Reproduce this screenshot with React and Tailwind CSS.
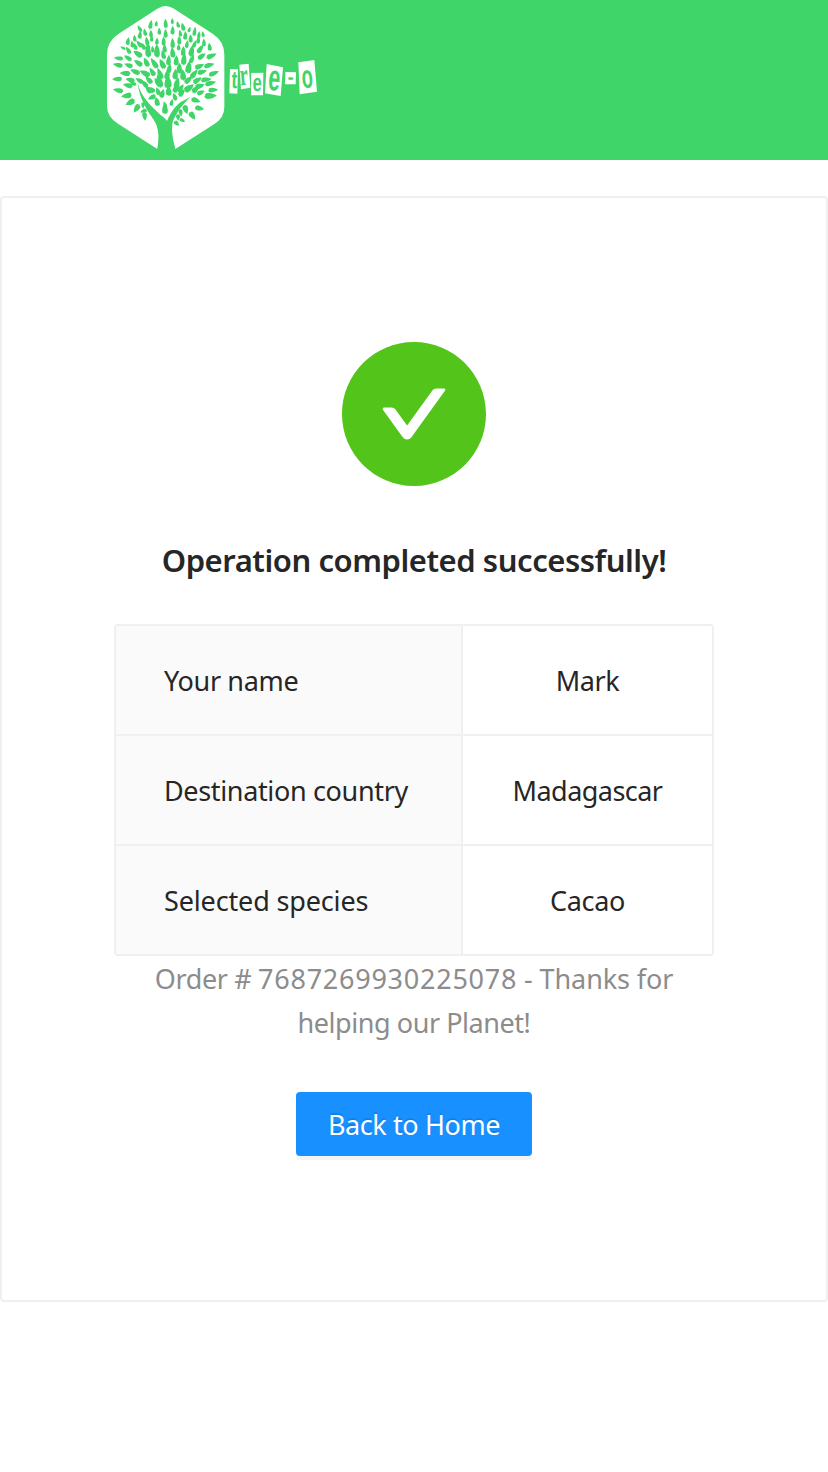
const leaves = [
  [152,74,29,12,12],[169,71,18,9,8],[197,71,29,12,-3],[217,64,18,9,0],[234,74,21,10,-14],[249,81,26,12,-12],
  [119,86,24,10,-30],[135,97,24,11,-10],[178,94,22,11,0],[218,91,28,12,5],[241,100,22,10,-8],[284,95,29,11,10],[268,89,18,9,20],[309,103,19,9,-12],[297,105,22,10,10],
  [120,105,26,12,8],[153,101,24,11,0],[197,101,28,12,0],[256,107,28,12,5],[272,116,26,12,0],[104,115,22,10,-5],
  [84,124,25,12,12],[97,133,22,11,-5],[118,132,28,12,-38],[141,124,28,12,-10],[155,115,22,10,0],[171,124,22,11,5],[191,124,30,12,0],[218,130,32,13,0],[238,121,28,12,0],[295,120,24,11,8],[312,128,25,11,0],[261,133,25,11,12],[284,132,24,11,20],
  [69,144,18,8,-60],[85,151,26,12,-30],[106,140,22,11,-15],[144,153,42,17,-5],[171,153,43,17,0],[194,146,28,13,0],[218,158,34,15,-5],[236,142,20,11,0],[250,154,32,14,5],[275,153,38,16,12],[329,141,26,12,-5],[301,147,32,14,35],
  [56,175,30,12,-82],[84,174,28,13,-55],[114,162,32,16,-55],[130,139,25,12,-25],[145,139,21,10,-12],[158,148,22,10,-6],[190,165,28,13,-16],[206,181,34,14,6],[229,182,32,15,6],[252,178,38,16,8],[276,177,28,13,25],[305,169,30,14,55],[334,168,34,15,68],
  [54,195,32,13,-76],[86,196,28,14,-68],[115,189,31,15,-56],[139,187,31,15,-25],[163,190,39,15,-32],[187,192,34,16,-24],[208,206,30,14,14],[238,205,35,16,3],[266,202,40,18,10],[298,199,31,15,68],[327,196,34,14,76],
  [76,220,33,15,-83],[106,215,32,15,-65],[135,220,36,16,-62],[157,216,30,14,-30],[180,221,39,15,-20],[202,224,34,16,10],[226,223,34,16,5],[249,225,36,17,-5],[282,222,34,15,40],[306,216,31,14,76],[341,220,34,14,70],
  [52,237,31,13,-89],[91,240,30,14,-76],[119,242,28,13,-58],[147,240,30,14,-42],[172,246,30,14,-32],[202,248,38,17,0],[231,250,38,17,12],[265,240,32,15,48],[292,241,31,15,61],[318,239,34,14,83],
  [55,271,33,14,-75],[84,256,31,14,-74],[99,250,24,11,-60],[134,252,29,14,-42],[146,269,29,15,-43],[178,244,43,19,-13],[205,247,37,20,0],[242,265,30,15,38],[267,264,37,18,55],[299,258,31,15,75],[331,250,36,14,77],[339,270,31,14,88],
  [80,287,33,17,-96],[156,292,26,14,-112],[154,269,27,14,-56],[174,274,27,13,-18],[187,281,29,15,18],[206,273,32,17,0],[227,266,28,15,22],[224,290,23,12,-22],[245,279,27,15,40],[287,268,29,16,50],[302,278,26,13,70],[331,288,39,18,88],
  [91,307,32,17,-116],[110,325,31,16,-145],[131,333,22,12,-105],[134,349,26,14,175],[129,316,20,10,180],[171,305,29,15,-10],[195,314,20,10,-20],[195,326,36,17,0],[215,308,22,11,15],[226,293,20,10,0],[287,301,30,15,110],[298,325,29,15,105],[257,328,29,16,164],[277,347,29,16,146],[242,338,24,12,172],[234,352,21,12,180],[247,361,20,10,120],[230,370,20,12,135]
];

const tiles = [
  { letter: 't', points: '24,57 48,58 46,131 22,130', x: 36, y: 114, size: 74, sx: .7, rotate: 2 },
  { letter: 'r', points: '52,44 80,41 85,113 57,118', x: 68, y: 105, size: 92, sx: .6, rotate: -5, serif: true },
  { letter: 'e', points: '87,69 124,68 123,136 87,136', x: 105, y: 123, size: 74, sx: .66, rotate: 1 },
  { letter: 'e', points: '134,42 183,52 176,138 129,130', x: 154, y: 121, size: 110, sx: .58, rotate: 5 },
  { letter: '-', points: '190,66 222,67 221,103 189,103', x: 206, y: 101, size: 58, sx: .95, rotate: 2 },
  { letter: 'o', points: '229,37 277,30 285,125 233,133', x: 258, y: 113, size: 98, sx: .56, rotate: -5 },
];

function Logo() {
  return (
    <svg className="block h-40 w-[230px]" viewBox="0 0 690 480" role="img" aria-label="tree-o">
      <path fill="#fff" d="M172 26Q197 10 222 26L338 101Q373 124 373 163V322Q373 354 342 373L226 447Q213 408 217 373H174Q181 405 172 447L54 371Q21 351 21 318V163Q21 124 56 101Z" />
      <g fill="#3fd569">
        {leaves.map(([x, y, h, w, angle], i) => (
          <path key={i} transform={`translate(${x} ${y}) rotate(${angle}) scale(${w / 18} ${h / 34})`} d="M-1-17C6-9 9-2 9 6C9 12 6 15 2 14L0 17L-2 13C-7 15-9 10-9 5C-9-4-5-10-1-17Z" />
        ))}
        <path d="M112 245C122 287 144 307 170 334C185 350 195 353 201 363C212 338 222 323 241 307L271 291C250 311 230 336 219 363C210 391 220 422 226 449H172C180 410 174 376 161 359C139 327 120 300 112 245Z" />
      </g>
      <g transform="translate(366 150)" fontWeight="700" textAnchor="middle">
        {tiles.map(({ letter, points, x, y, size, sx, rotate, serif }, i) => (
          <g key={i}>
            <polygon points={points} fill="#fff" />
            <text transform={`translate(${x} ${y}) rotate(${rotate}) scale(${sx} 1)`} fontFamily={serif ? 'Liberation Serif' : 'Liberation Sans'} fontSize={size} fill="#3fd569">{letter}</text>
          </g>
        ))}
      </g>
    </svg>
  );
}

const details = [
  { label: 'Your name', value: 'Mark', labelSpace: 'tracking-[-0.35px]', valueSpace: 'tracking-[-0.4px]' },
  { label: 'Destination country', value: 'Madagascar', labelSpace: 'tracking-[-0.35px]', valueSpace: 'tracking-[-0.55px]' },
  { label: 'Selected species', value: 'Cacao', labelSpace: 'tracking-[-0.15px]', valueSpace: 'tracking-[-0.3px]' },
];

export default function App() {
  return (
    <div className="min-h-[1472px] bg-white font-['Noto_Sans',sans-serif] text-[27px] leading-[44px] text-[#262626]">
      <header className="h-40 bg-[#3fd569] pl-[100px]"><Logo /></header>
      <main className="mt-9 flex h-[1106px] flex-col items-center rounded-[4px] border-2 border-[#f0f0f0] bg-white pt-36">
        <svg className="size-36 shrink-0" viewBox="64 64 896 896" fill="#52c41a">
          <path d="M512 64C264.6 64 64 264.6 64 512s200.6 448 448 448 448-200.6 448-448S759.4 64 512 64zm193.5 301.7l-210.6 292a31.8 31.8 0 01-51.7 0L318.5 484.9c-3.8-5.3 0-12.7 6.5-12.7h46.9c10.2 0 19.9 4.9 25.9 13.3l71.2 98.8 157.2-218c6-8.3 15.6-13.3 25.9-13.3H699c6.5 0 10.3 7.4 6.5 12.7z" />
        </svg>
        <h1 className="mt-[49px] whitespace-nowrap text-[31px] font-semibold leading-[51px] tracking-[-0.45px]">Operation completed successfully!</h1>
        <dl className="mt-[38px] w-[600px] overflow-hidden rounded-[4px] border-2 border-[#f0f0f0]">
          {details.map(({ label, value, labelSpace, valueSpace }) => (
            <div key={label} className="flex h-[110px] border-b-2 border-[#f0f0f0] last:h-[108px] last:border-b-0">
              <dt className="flex w-[347px] items-center border-r-2 border-[#f0f0f0] bg-[#fafafa] pl-12 pt-px"><span className={labelSpace}>{label}</span></dt>
              <dd className="flex flex-1 items-center justify-center pt-px"><span className={valueSpace}>{value}</span></dd>
            </div>
          ))}
        </dl>
        <p className="flex flex-col items-center whitespace-nowrap pt-px text-[#8c8c8c]">
          <span><span className="tracking-[-0.35px]">Order # </span><span className="tracking-[0.75px]">7687269930225078</span><span className="tracking-[-0.1px]"> - Thanks for</span></span>
          <span className="tracking-[-0.45px]">helping our Planet!</span>
        </p>
        <button className="mt-[47px] flex h-16 w-[236px] shrink-0 items-center justify-center whitespace-nowrap rounded-[4px] bg-[#1890ff] pt-px tracking-[-0.4px] text-white shadow-[0_4px_0_rgba(0,0,0,0.045)] [text-shadow:0_-2px_0_rgba(0,0,0,0.12)]">Back to Home</button>
      </main>
    </div>
  );
}
